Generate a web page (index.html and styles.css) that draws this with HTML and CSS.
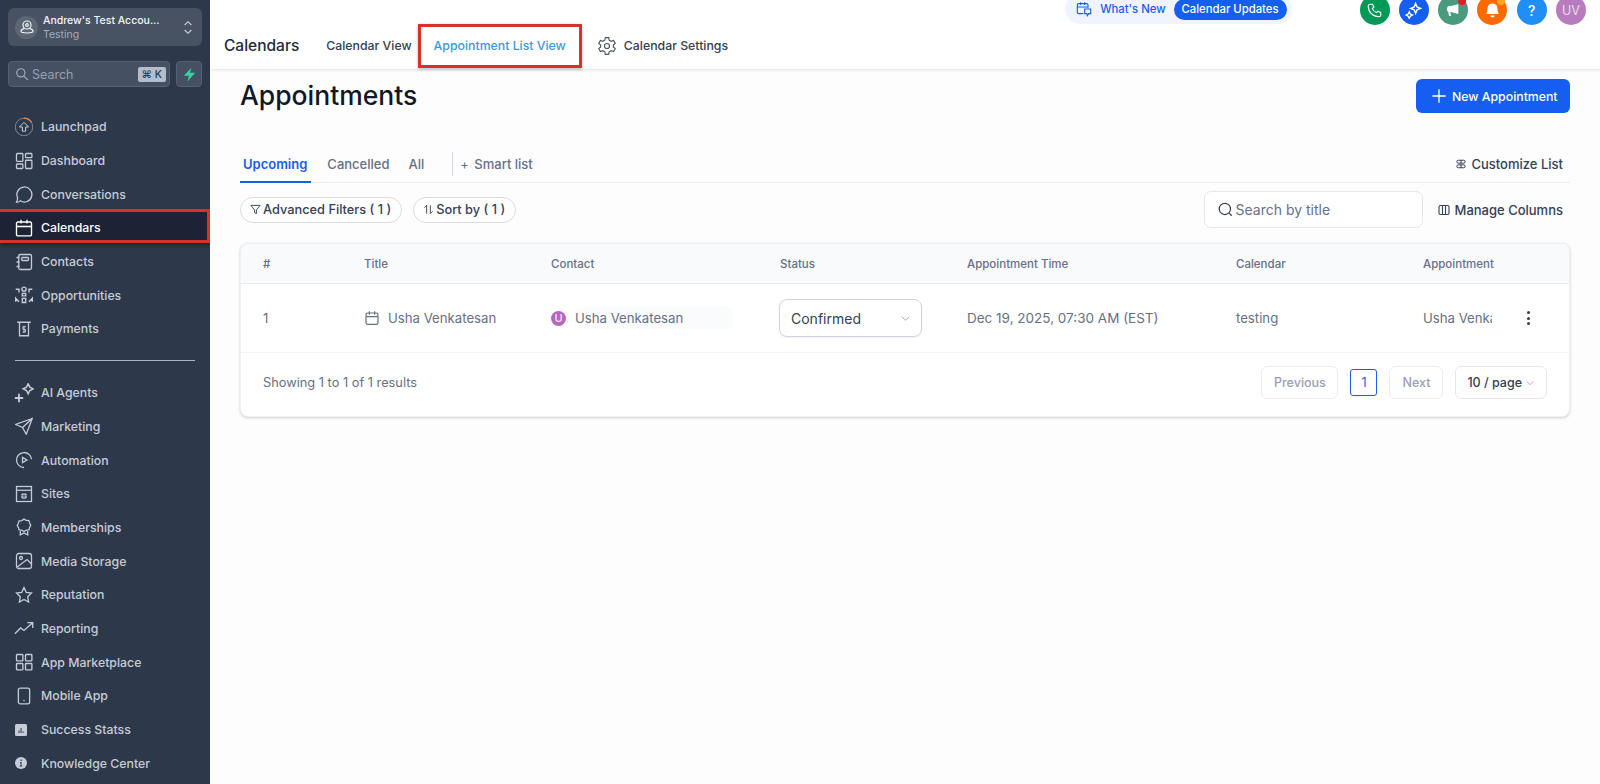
FILE: index.html
```html
<!DOCTYPE html>
<html lang="en">

<head>
    <meta charset="UTF-8">
    <meta name="viewport" content="width=device-width, initial-scale=1.0">
    <title>Appointments</title>
    <link rel="stylesheet" href="styles.css">
</head>

<body>
    <div class="app">

        <aside class="sidebar">
            <div class="account">
                <span class="account-pic">
                    <svg viewBox="0 0 24 24" width="16" height="16" fill="none" stroke="currentColor" stroke-width="1.8"><circle cx="12" cy="9" r="6"/><circle cx="12" cy="9" r="2"/><path d="M8 14c-3 1-5 2.500-5 4.500 0 1.500 2 2.500 9 2.500s9-1 9-2.500c0-2-2-3.500-5-4.500"/></svg>
                </span>
                <div class="account-text">
                    <div class="account-name">Andrew's Test Accou...</div>
                    <div class="account-sub">Testing</div>
                </div>
                <svg class="account-arrows" viewBox="0 0 12 20" width="10" height="17" fill="none" stroke="currentColor" stroke-width="1.3"><path d="M2 7l4-4 4 4M2 13l4 4 4-4"/></svg>
            </div>

            <div class="search-row">
                <div class="side-search">
                    <svg viewBox="0 0 24 24" width="14" height="14" fill="none" stroke="currentColor" stroke-width="2"><circle cx="10" cy="10" r="7"/><path d="M15.500 15.500L22 22"/></svg>
                    <span class="side-search-text">Search</span>
                    <span class="kbd">⌘ K</span>
                </div>
                <div class="bolt">
                    <svg viewBox="0 0 24 24" width="15" height="15" fill="#34d399"><path d="M15 1L3 14h8l-2 9 12-14h-8z"/></svg>
                </div>
            </div>

            <nav class="nav">
                <a class="nav-item">
                    <svg class="nav-icon big" viewBox="0 0 24 24" fill="none" stroke="currentColor" stroke-width="1.2"><circle cx="12" cy="12" r="10.500" stroke="#7a8598"/><path d="M12 1.500a10.500 10.500 0 0 1 9 5" stroke="#e8894a" stroke-width="1.500"/><path d="M12 6.500L6.500 12H10v5h4v-5h3.500z"/></svg>
                    Launchpad
                </a>
                <a class="nav-item">
                    <svg class="nav-icon" viewBox="0 0 24 24" fill="none" stroke="currentColor" stroke-width="1.7"><rect x="2" y="2" width="8.500" height="10.500" rx="1"/><rect x="14" y="2" width="8.500" height="5.500" rx="1"/><rect x="2" y="16" width="8.500" height="6" rx="1"/><rect x="14" y="11" width="8.500" height="11" rx="1"/></svg>
                    Dashboard
                </a>
                <a class="nav-item">
                    <svg class="nav-icon" viewBox="0 0 24 24" fill="none" stroke="currentColor" stroke-width="1.7"><path d="M2 23c2 0 4-.5 5-2a10 10 0 1 0-3.500-4c0 2-.5 4-1.500 6z"/></svg>
                    Conversations
                </a>
                <a class="nav-item active">
                    <svg class="nav-icon" viewBox="0 0 24 24" fill="none" stroke="currentColor" stroke-width="1.8"><rect x="2" y="4" width="20" height="18.500" rx="2"/><path d="M2 10h20M8 1v5M16 1v5"/></svg>
                    Calendars
                </a>
                <a class="nav-item">
                    <svg class="nav-icon" viewBox="0 0 24 24" fill="none" stroke="currentColor" stroke-width="1.7"><rect x="5" y="2" width="17" height="20" rx="2"/><rect x="9" y="6" width="9" height="4" rx="1"/><path d="M2 6h4M2 12h4M2 18h4"/></svg>
                    Contacts
                </a>
                <a class="nav-item">
                    <svg class="nav-icon big" viewBox="0 0 24 24" fill="none" stroke="currentColor" stroke-width="1.700"><circle cx="12" cy="5" r="2.500"/><path d="M10 10h4v3h-4zM10 16h4v5h-4zM2 5h4v4M22 5h-4v4M2 20v-4l4 4M22 20v-4l-4 4"/></svg>
                    Opportunities
                </a>
                <a class="nav-item">
                    <svg class="nav-icon" viewBox="0 0 24 24" fill="none" stroke="currentColor" stroke-width="1.7"><path d="M3 3h18M6 3v18h12V3"/><path d="M14.500 9h-4v3.500h3.500V16h-4M12 7.500v10" stroke-width="1.300"/></svg>
                    Payments
                </a>

                <div class="nav-divider"></div>

                <a class="nav-item">
                    <svg class="nav-icon big" viewBox="0 0 24 24" fill="none" stroke="currentColor" stroke-width="1.8"><path d="M1 18h10M6 13v10" stroke-width="2.200"/><path d="M17 1l2 4 4 2-4 2-2 4-2-4-4-2 4-2z"/></svg>
                    AI Agents
                </a>
                <a class="nav-item">
                    <svg class="nav-icon" viewBox="0 0 24 24" fill="none" stroke="currentColor" stroke-width="1.7"><path d="M23 2L1 10l9 4 5 9zM23 2L10 14"/></svg>
                    Marketing
                </a>
                <a class="nav-item">
                    <svg class="nav-icon" viewBox="0 0 24 24" fill="none" stroke="currentColor" stroke-width="1.7"><path d="M22 11A10 10 0 1 0 12 22"/><path d="M10 8.500l6 3.500-6 3.500z"/></svg>
                    Automation
                </a>
                <a class="nav-item">
                    <svg class="nav-icon" viewBox="0 0 24 24" fill="none" stroke="currentColor" stroke-width="1.7"><rect x="2" y="2" width="20" height="20"/><path d="M2 7h20"/><circle cx="12" cy="14.500" r="4" fill="currentColor" stroke="none"/><path d="M8 14.500h8M12 10.500v8" stroke="#2e384b" stroke-width="1"/></svg>
                    Sites
                </a>
                <a class="nav-item">
                    <svg class="nav-icon" viewBox="0 0 24 24" fill="none" stroke="currentColor" stroke-width="1.7"><path d="M12 1.500l3 1.800 3.500.2 1 3.300 1.500 3-1.500 3-1 3.200-3.500.3-3 1.700-3-1.700-3.500-.3-1-3.200L3 10l1.500-3 1-3.300 3.500-.2z"/><path d="M7 17v5.500l5-2.500 5 2.500V17"/></svg>
                    Memberships
                </a>
                <a class="nav-item">
                    <svg class="nav-icon" viewBox="0 0 24 24" fill="none" stroke="currentColor" stroke-width="1.7"><rect x="2" y="2" width="20" height="20" rx="3"/><circle cx="8" cy="8" r="2"/><path d="M3 20L16 10l6 6"/></svg>
                    Media Storage
                </a>
                <a class="nav-item">
                    <svg class="nav-icon" viewBox="0 0 24 24" fill="none" stroke="currentColor" stroke-width="1.7"><path d="M12 2l3 6.500 7 .9-5.100 4.900 1.300 7L12 17.900l-6.200 3.400 1.300-7L2 9.400l7-.9z"/></svg>
                    Reputation
                </a>
                <a class="nav-item">
                    <svg class="nav-icon big" viewBox="0 0 24 24" fill="none" stroke="currentColor" stroke-width="1.600"><path d="M1 19l7-7 4 3 10-9M16 5.500h6.500V12"/></svg>
                    Reporting
                </a>
                <a class="nav-item">
                    <svg class="nav-icon" viewBox="0 0 24 24" fill="none" stroke="currentColor" stroke-width="1.800"><rect x="2" y="2" width="8.500" height="8.500" rx="1"/><rect x="14" y="2" width="8.500" height="8.500" rx="1"/><rect x="2" y="14" width="8.500" height="8.500" rx="1"/><rect x="14" y="14" width="8.500" height="8.500" rx="1"/></svg>
                    App Marketplace
                </a>
                <a class="nav-item">
                    <svg class="nav-icon" viewBox="0 0 24 24" fill="none" stroke="currentColor" stroke-width="1.7"><rect x="4.500" y="1.500" width="15" height="21" rx="2.500"/><circle cx="12" cy="18" r="1" fill="currentColor" stroke="none"/></svg>
                    Mobile App
                </a>
                <a class="nav-item">
                    <svg class="nav-icon small" viewBox="0 0 24 24"><path fill="currentColor" d="M3 0h18a3 3 0 0 1 3 3v18a3 3 0 0 1-3 3H3a3 3 0 0 1-3-3V3a3 3 0 0 1 3-3z"/><path d="M7 13h2v5H7zM11 8h2v10h-2zM15 15h2v3h-2z" fill="#2e384b"/></svg>
                    Success Statss
                </a>
                <a class="nav-item">
                    <svg class="nav-icon small" viewBox="0 0 24 24"><circle cx="12" cy="12" r="12" fill="currentColor"/><path d="M10 10h3v7h1.500v2h-5v-2H11v-5h-1zM11 5h2.500v3H11z" fill="#2e384b"/></svg>
                    Knowledge Center
                </a>
            </nav>
        </aside>

        <div class="main">
            <header class="topbar">
                <div class="topbar-title">Calendars</div>
                <a class="top-tab first">Calendar View</a>
                <a class="top-tab current">Appointment List View</a>
                <svg class="gear" viewBox="0 0 24 24" width="20" height="20" fill="none" stroke="#4b5563" stroke-width="1.400"><circle cx="12" cy="12" r="3"/><path d="M10 2h4l.6 3 2.400 1.300 2.900-1 2 3.500-2.300 2a6 6 0 0 1 0 2.400l2.300 2-2 3.500-2.900-1L14.600 19l-.6 3h-4l-.6-3L7 17.700l-2.900 1-2-3.500 2.300-2a6 6 0 0 1 0-2.400l-2.300-2 2-3.500 2.900 1L9.400 5z"/></svg>
                <a class="top-tab">Calendar Settings</a>

                <div class="top-right">
                    <div class="whats-new">
                        <svg viewBox="0 0 24 24" width="16" height="16" fill="none" stroke="#155eef" stroke-width="1.700"><path d="M11 19H4a2 2 0 0 1-2-2V6a2 2 0 0 1 2-2h12a2 2 0 0 1 2 2v4M2 9h16M7 2v4M13 2v4"/><path d="M13 12h9v7h-3l-2 3-1-3h-3z"/></svg>
                        <span class="whats-new-text">What's New</span>
                        <span class="updates">Calendar Updates</span>
                    </div>
                    <div class="circles">
                        <span class="circle green">
                            <svg viewBox="0 0 24 24" width="15" height="15" fill="none" stroke="#fff" stroke-width="1.800"><path d="M5 2h4l2 5-2.500 1.500a11 11 0 0 0 7 7L17 13l5 2v4a3 3 0 0 1-3 3A17 17 0 0 1 2 5a3 3 0 0 1 3-3z"/></svg>
                        </span>
                        <span class="circle blue">
                            <svg viewBox="0 0 24 24" width="17" height="17" fill="none" stroke="#fff" stroke-width="2"><path d="M15 2l2 5 5 2-5 2-2 5-2-5-5-2 5-2zM6 14l1.500 3 3 1.500-3 1.500L6 23l-1.500-3-3-1.500 3-1.500z"/></svg>
                        </span>
                        <span class="circle teal">
                            <svg viewBox="0 0 24 24" width="16" height="16" fill="#fff"><path d="M20 3v15L9 15H8l1 6H6l-1-6a4 4 0 0 1-2-3.500V10a4 4 0 0 1 4-4h2z"/></svg>
                            <span class="dot red"></span>
                        </span>
                        <span class="circle orange">
                            <svg viewBox="0 0 24 24" width="17" height="17" fill="#fff"><path d="M12 2a7 7 0 0 0-7 7c0 5-2 7-2 8h18c0-1-2-3-2-8a7 7 0 0 0-7-7zM9 19h6a3 3 0 0 1-6 0z"/></svg>
                            <span class="dot amber"></span>
                        </span>
                        <span class="circle sky">?</span>
                        <span class="circle purple">UV</span>
                    </div>
                </div>
            </header>

            <div class="content">
                <div class="title-row">
                    <h1>Appointments</h1>
                    <button class="new-btn">
                        <svg viewBox="0 0 24 24" width="16" height="16" fill="none" stroke="#fff" stroke-width="2"><path d="M12 2v20M2 12h20"/></svg>
                        New Appointment
                    </button>
                </div>

                <div class="tabs">
                    <a class="tab selected">Upcoming</a>
                    <a class="tab">Cancelled</a>
                    <a class="tab">All</a>
                    <span class="tab-sep"></span>
                    <a class="smart"><span class="smart-plus">+</span> Smart list</a>
                    <a class="tool customize">
                        <svg viewBox="0 0 24 24" width="10" height="10" fill="none" stroke="#344054" stroke-width="2.400"><rect x="2" y="3" width="20" height="7" rx="3.500"/><rect x="2" y="14" width="20" height="7" rx="3.500"/><path d="M12 3v7M12 14v7"/></svg>
                        Customize List
                    </a>
                </div>

                <div class="filters">
                    <span class="pill">
                        <svg viewBox="0 0 24 24" width="11" height="11" fill="none" stroke="#344054" stroke-width="2"><path d="M2 3h20l-8 10v8l-4-2v-6z"/></svg>
                        Advanced Filters ( 1 )
                    </span>
                    <span class="pill">
                        <svg viewBox="0 0 24 24" width="11" height="11" fill="none" stroke="#344054" stroke-width="2"><path d="M8 21V3L3 8M16 3v18l5-5"/></svg>
                        Sort by ( 1 )
                    </span>
                    <div class="title-search">
                        <svg viewBox="0 0 24 24" width="15" height="15" fill="none" stroke="#344054" stroke-width="2"><circle cx="11" cy="11" r="9"/><path d="M18 18l4 4"/></svg>
                        Search by title
                    </div>
                    <a class="tool">
                        <svg viewBox="0 0 24 24" width="12" height="12" fill="none" stroke="#344054" stroke-width="2.200"><rect x="2" y="3" width="20" height="18" rx="3"/><path d="M9 3v18M15 3v18"/></svg>
                        Manage Columns
                    </a>
                </div>

                <div class="card">
                    <div class="grid-row head">
                        <div>#</div>
                        <div>Title</div>
                        <div>Contact</div>
                        <div>Status</div>
                        <div>Appointment Time</div>
                        <div>Calendar</div>
                        <div>Appointment</div>
                        <div></div>
                    </div>
                    <div class="grid-row body">
                        <div>1</div>
                        <div class="with-icon">
                            <svg viewBox="0 0 24 24" width="16" height="16" fill="none" stroke="#667085" stroke-width="1.800"><rect x="3" y="4.500" width="18" height="17" rx="2.500"/><path d="M3 10h18M8 2v5M16 2v5"/></svg>
                            Usha Venkatesan
                        </div>
                        <div class="contact">
                            <span class="avatar">U</span>
                            <span class="contact-name">Usha Venkatesan</span>
                        </div>
                        <div>
                            <div class="status-select">
                                Confirmed
                                <svg viewBox="0 0 12 12" width="11" height="11" fill="none" stroke="#98a2b3" stroke-width="1"><path d="M2 4l4 4 4-4"/></svg>
                            </div>
                        </div>
                        <div class="time">Dec 19, 2025, 07:30 AM (EST)</div>
                        <div>testing</div>
                        <div class="clip">Usha Venkatesan</div>
                        <div class="more"><span></span><span></span><span></span></div>
                    </div>
                    <div class="card-foot">
                        <span class="showing">Showing 1 to 1 of 1 results</span>
                        <span class="pager-btn prev">Previous</span>
                        <span class="pager-num">1</span>
                        <span class="pager-btn next">Next</span>
                        <span class="pager-size">10 / page
                            <svg viewBox="0 0 12 12" width="10" height="10" fill="none" stroke="#98a2b3" stroke-width="1"><path d="M2 4l4 4 4-4"/></svg>
                        </span>
                    </div>
                </div>
            </div>
        </div>
    </div>
</body>

</html>
```

FILE: styles.css
```css
* {
    margin: 0;
    padding: 0;
    box-sizing: border-box;
    font-family: Inter, "Liberation Sans", sans-serif;
}

body {
    width: 1600px;
    height: 784px;
    overflow: hidden;
    background-color: #fdfdfd;
}

.app {
    display: flex;
    height: 784px;
}

/* sidebar */

.sidebar {
    width: 210px;
    flex-shrink: 0;
    background-color: #2e384b;
    padding-top: 8px;
    overflow: hidden;
}

.account {
    display: flex;
    align-items: center;
    height: 38px;
    margin: 0 8px;
    padding: 0 9px 0 7px;
    background-color: #485263;
    border-radius: 6px;
}

.account-pic {
    width: 23px;
    height: 23px;
    border-radius: 50%;
    background-color: #5d6675;
    color: #f1f5f9;
    display: flex;
    align-items: center;
    justify-content: center;
    margin-right: 5px;
}

.account-text {
    flex: 1;
    min-width: 0;
    padding-top: 1px;
}

.account-name {
    font-size: 10.500px;
    font-weight: 500;
    color: #f1f5f9;
    line-height: 14px;
    white-space: nowrap;
}

.account-sub {
    font-size: 10.500px;
    color: #a3adba;
    line-height: 14px;
}

.account-arrows {
    color: #cbd5e1;
}

.search-row {
    display: flex;
    gap: 6px;
    margin: 15px 8px 0;
}

.side-search {
    display: flex;
    align-items: center;
    width: 162px;
    height: 26px;
    padding: 0 3px 0 6px;
    background-color: #465063;
    border: 1px solid #566073;
    border-radius: 4px;
    color: #a3adba;
}

.side-search-text {
    flex: 1;
    font-size: 12.500px;
    margin-left: 3px;
    color: #97a1b1;
}

.kbd {
    font-size: 10.500px;
    font-weight: 500;
    color: #2e384b;
    background-color: #b6bdc8;
    border-radius: 2px;
    padding: 1px 4px;
}

.bolt {
    width: 26px;
    height: 26px;
    background-color: #465063;
    border: 1px solid #566073;
    border-radius: 4px;
    display: flex;
    align-items: center;
    justify-content: center;
}

.nav {
    margin-top: 23px;
}

.nav-item {
    position: relative;
    display: flex;
    align-items: center;
    height: 33.700px;
    padding-left: 15px;
    font-size: 12.300px;
    font-weight: 500;
    color: #c5ccd8;
    white-space: nowrap;
}

.nav-icon {
    width: 18px;
    height: 18px;
    margin-right: 8px;
    flex-shrink: 0;
    color: #c5ccd8;
}

.nav-icon.big {
    width: 20px;
    height: 20px;
    margin-left: -1px;
    margin-right: 7px;
}

.nav-icon.small {
    width: 12px;
    height: 12px;
    margin-right: 14px;
}

.nav-item.active {
    color: #fff;
    isolation: isolate;
}

.nav-item.active .nav-icon {
    color: #fff;
}

/* red annotation box behind the row text */
.nav-item.active::before {
    content: "";
    position: absolute;
    z-index: -1;
    left: 0;
    right: 0;
    top: -2px;
    bottom: 2px;
    background-color: #1b2334;
    border: 3px solid #d9302a;
    border-left: 0;
    box-shadow: 0 2px 4px rgba(0, 0, 0, 0.4);
}

.nav-divider {
    height: 1px;
    margin: 14px 15px 15px;
    background-color: #a9b2c2;
}

/* top bar */

.main {
    flex: 1;
    min-width: 0;
}

.topbar {
    display: flex;
    align-items: center;
    height: 69px;
    padding: 22px 0 0 14px;
    background-color: #fff;
    box-shadow: 0 1px 3px rgba(16, 24, 40, 0.12);
    position: relative;
}

.topbar-title {
    font-size: 15.500px;
    font-weight: 500;
    color: #1d2939;
    margin-right: 27px;
}

.top-tab {
    font-size: 12.300px;
    font-weight: 500;
    color: #344054;
}

.top-tab.current {
    display: flex;
    align-items: center;
    height: 44px;
    margin: 0 15px 0 6px;
    padding: 0 13px;
    color: #3a9ad9;
    border: 3px solid #d9302a;
    box-shadow: 0 1px 3px rgba(0, 0, 0, 0.3);
}

.gear {
    margin-right: 7px;
}

.top-right {
    position: absolute;
    top: -5px;
    right: 14px;
    display: flex;
    align-items: flex-start;
}

.whats-new {
    display: flex;
    align-items: center;
    height: 30px;
    margin-top: -1px;
    padding: 0 5px 0 11px;
    border-radius: 16px;
    background-color: #eff4ff;
    margin-right: 68px;
}

.whats-new-text {
    font-size: 11.300px;
    font-weight: 500;
    color: #155eef;
    margin: 0 8px 0 8px;
}

.updates {
    font-size: 11.300px;
    font-weight: 500;
    color: #fff;
    background-color: #155eef;
    border-radius: 11px;
    padding: 3px 8px;
    line-height: 15px;
}

.circles {
    display: flex;
    gap: 9.300px;
}

.circle {
    position: relative;
    width: 30px;
    height: 30px;
    border-radius: 50%;
    display: flex;
    align-items: center;
    justify-content: center;
    color: #fff;
    font-size: 12.500px;
}

.green { background-color: #039855; }
.blue { background-color: #155eef; }
.teal { background-color: #4a9a7e; }
.orange { background-color: #ff6a00; }
.sky { background-color: #1f8ff5; font-weight: 500; font-size: 14px; }
.purple { background-color: #b87cbe; color: #eadcec; }

.dot {
    position: absolute;
    top: 2px;
    right: 2px;
    width: 8px;
    height: 8px;
    border-radius: 50%;
}

.dot.red { background-color: #e11d27; }
.dot.amber { background-color: #f9a825; }

/* page content */

.content {
    padding: 0 30px 0 30px;
}

.title-row {
    display: flex;
    justify-content: space-between;
    align-items: flex-start;
    height: 66px;
    padding-top: 10px;
}

h1 {
    font-size: 26.500px;
    font-weight: 500;
    line-height: 33px;
    color: #101828;
}

.new-btn {
    display: flex;
    align-items: center;
    gap: 5px;
    width: 154px;
    height: 34px;
    padding-left: 15px;
    border: none;
    border-radius: 6px;
    background-color: #155eef;
    color: #fff;
    font-size: 12.300px;
    font-weight: 500;
}

.tabs {
    display: flex;
    align-items: center;
    height: 48px;
    padding-top: 10px;
    border-bottom: 1px solid #eaecf0;
}

.tab {
    display: flex;
    align-items: center;
    height: 100%;
    font-size: 13px;
    font-weight: 500;
    color: #667085;
    margin-right: 19px;
}

.tab.selected {
    color: #155eef;
    font-weight: 600;
    padding: 2px 4px 0 3px;
    border-bottom: 2px solid #155eef;
    margin-bottom: -1px;
    height: calc(100% + 1px);
    margin-right: 16px;
}

.tab-sep {
    width: 1px;
    height: 24px;
    background-color: #d0d5dd;
    margin-left: 9px;
    margin-right: 7px;
}

.smart {
    font-size: 13px;
    font-weight: 500;
    color: #667085;
}

.smart-plus {
    margin-right: 2px;
    font-weight: 400;
}

.tool {
    display: flex;
    align-items: center;
    gap: 5px;
    font-size: 13px;
    font-weight: 500;
    color: #344054;
    white-space: nowrap;
}

.tool.customize {
    margin-left: auto;
    padding-right: 7px;
}

.filters {
    display: flex;
    align-items: center;
    gap: 11px;
    height: 60px;
    padding: 0 7px 7px 0;
}

.pill {
    display: flex;
    align-items: center;
    gap: 2px;
    height: 26px;
    padding: 0 10px 0 9px;
    border: 1px solid #d8dce3;
    border-radius: 13px;
    background-color: #fff;
    font-size: 12.800px;
    font-weight: 500;
    color: #344054;
    white-space: nowrap;
}

.title-search {
    display: flex;
    align-items: center;
    gap: 3px;
    width: 219px;
    height: 37px;
    margin-left: auto;
    margin-right: 4px;
    padding-left: 13px;
    border: 1px solid #e4e7ec;
    border-radius: 7px;
    background-color: #fff;
    font-size: 14px;
    color: #667085;
}

/* table card */

.card {
    width: 1330px;
    border-radius: 8px;
    background-color: #fff;
    border: 1px solid #eef0f3;
    box-shadow: 0 1px 3px rgba(16, 24, 40, 0.2);
    overflow: hidden;
}

.grid-row {
    display: grid;
    grid-template-columns: 101px 187px 229px 187px 269px 187px 69px 1fr;
    align-items: center;
    padding-left: 22px;
}

.grid-row.head {
    height: 40px;
    background-color: #f8fafc;
    border-bottom: 1px solid #eaecf0;
    font-size: 11.500px;
    font-weight: 500;
    color: #667085;
}

.grid-row.body {
    height: 69px;
    border-bottom: 1px solid #f2f4f7;
    font-size: 13.200px;
    color: #667085;
}

.time {
    font-size: 13.500px;
}

.clip {
    overflow: hidden;
    white-space: nowrap;
}

.with-icon {
    display: flex;
    align-items: center;
    gap: 8px;
}

.contact {
    display: flex;
    align-items: center;
    gap: 9px;
}

.avatar {
    width: 15px;
    height: 15px;
    border-radius: 50%;
    background-color: #b865bd;
    color: #f5e3f6;
    font-size: 11px;
    font-weight: 500;
    display: flex;
    align-items: center;
    justify-content: center;
    flex-shrink: 0;
}

.contact-name {
    width: 158px;
    height: 22px;
    line-height: 22px;
    background-color: #fafbfc;
    border-radius: 6px;
}

.status-select {
    display: flex;
    align-items: center;
    justify-content: space-between;
    width: 143px;
    height: 38px;
    padding: 0 10px 0 11px;
    margin-left: -1px;
    border: 1px solid #d0d5dd;
    border-radius: 8px;
    box-shadow: 0 1px 2px rgba(16, 24, 40, 0.06);
    font-size: 14px;
    color: #344054;
}

.more {
    display: flex;
    flex-direction: column;
    align-items: center;
    gap: 2.500px;
    margin-left: -4px;
}

.more span {
    width: 3px;
    height: 3px;
    border-radius: 50%;
    background-color: #344054;
}

.card-foot {
    display: flex;
    align-items: center;
    height: 63px;
    padding: 0 22px 4px;
}

.showing {
    font-size: 12.800px;
    color: #667085;
    margin-right: auto;
}

.pager-btn {
    display: flex;
    align-items: center;
    justify-content: center;
    height: 33px;
    border: 1px solid #eaecf0;
    border-radius: 6px;
    font-size: 12.500px;
    font-weight: 500;
    color: #98a2b3;
}

.prev { width: 77px; }
.next { width: 54px; }

.pager-num {
    display: flex;
    align-items: center;
    justify-content: center;
    width: 27px;
    height: 27px;
    margin: 0 12px;
    border: 1px solid #155eef;
    border-radius: 3px;
    font-size: 12.500px;
    color: #155eef;
}

.pager-size {
    display: flex;
    align-items: center;
    gap: 3px;
    height: 33px;
    margin-left: 12px;
    padding: 0 11px;
    border: 1px solid #e4e7ec;
    border-radius: 6px;
    font-size: 12.500px;
    font-weight: 500;
    color: #344054;
    white-space: nowrap;
}
```
